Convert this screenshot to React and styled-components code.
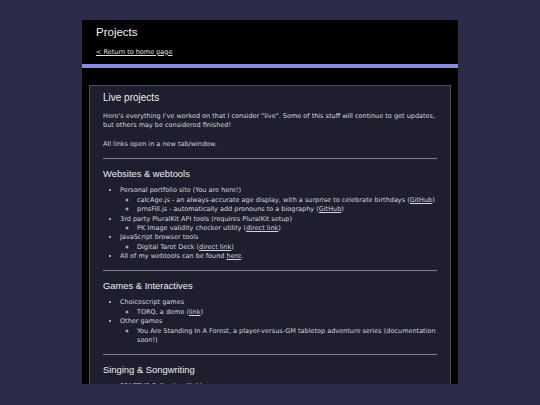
import React from "react"
import styled, { createGlobalStyle } from "styled-components"

const GlobalStyle = createGlobalStyle`
    html, body {
        margin: 0;
        padding: 0;
        background-color: #2c2c4a;
        height: 100%;
    }
    body {
        padding: 20px 0 21px;
        box-sizing: border-box;
    }
    #root {
        height: 100%;
    }
`

const PageFrame = styled.div`
    width: 376px;
    height: 100%;
    margin: 0 auto;
    background-color: #000;
    overflow: hidden;
    display: flex;
    flex-direction: column;
`

const Header = styled.header`
    padding: 6px 14px 7px;
    border-bottom: 4px solid #8b8bdc;
`

const PageTitle = styled.h1`
    margin: 0;
    font-family: "Liberation Sans", Arial, sans-serif;
    font-weight: normal;
    font-size: 11.5px;
    line-height: 13px;
    color: #f0f0f0;
`

const HomeLink = styled.a`
    display: block;
    margin-top: 8.6px;
    font-family: "DejaVu Sans", Verdana, sans-serif;
    font-size: 6.5px;
    line-height: 9.4px;
    color: #e0e0e4;
    text-decoration: underline;
`

const Body = styled.main`
    padding: 17px 7px 0;
`

const Card = styled.section`
    background-color: #1f1e2e;
    border: 1px solid #4c4c62;
    padding: 6px 13px 20px;
    font-family: "DejaVu Sans", Verdana, sans-serif;
    font-size: 6.5px;
    line-height: 9.4px;
    color: #d4d4dc;
`

const CardTitle = styled.h2`
    margin: 0 0 8.4px;
    font-family: "Liberation Sans", Arial, sans-serif;
    font-weight: normal;
    font-size: 10px;
    line-height: 11.5px;
    color: #ececf0;
`

const SectionTitle = styled(CardTitle)`
    font-size: 9.4px;
    margin-bottom: 6.7px;
`

const Intro = styled.p`
    margin: 0;
`

const Divider = styled.hr`
    border: none;
    height: 1px;
    background-color: #80808f;
    margin: 8.8px 0;
`

const List = styled.ul`
    margin: 0;
    padding-left: 17px;
    list-style-type: ${(props) => (props.$nested ? "circle" : "disc")};
`

const Link = styled.a`
    color: inherit;
    text-decoration: underline;
`

const App = () => {
    return (
        <>
            <GlobalStyle />
            <PageFrame>
                <Header>
                    <PageTitle>Projects</PageTitle>
                    <HomeLink href="#">&lt; Return to home page</HomeLink>
                </Header>
                <Body>
                    <Card>
                        <CardTitle>Live projects</CardTitle>
                        <Intro>
                            Here's everything I've worked on that I consider "live". Some of this stuff will continue to get updates, but others may be considered finished!
                            <br />
                            <br />
                            All links open in a new tab/window.
                        </Intro>

                        <Divider />
                        <SectionTitle>Websites &amp; webtools</SectionTitle>
                        <List>
                            <li>
                                Personal portfolio site (You are here!)
                                <List $nested>
                                    <li>calcAge.js - an always-accurate age display, with a surprise to celebrate birthdays (<Link href="#">GitHub</Link>)</li>
                                    <li>prnsFill.js - automatically add pronouns to a biography (<Link href="#">GitHub</Link>)</li>
                                </List>
                            </li>
                            <li>
                                3rd party PluralKit API tools (requires PluralKit setup)
                                <List $nested>
                                    <li>PK Image validity checker utility (<Link href="#">direct link</Link>)</li>
                                </List>
                            </li>
                            <li>
                                JavaScript browser tools
                                <List $nested>
                                    <li>Digital Tarot Deck (<Link href="#">direct link</Link>)</li>
                                </List>
                            </li>
                            <li>All of my webtools can be found <Link href="#">here</Link>.</li>
                        </List>

                        <Divider />
                        <SectionTitle>Games &amp; Interactives</SectionTitle>
                        <List>
                            <li>
                                Choicescript games
                                <List $nested>
                                    <li>TORQ, a demo (<Link href="#">link</Link>)</li>
                                </List>
                            </li>
                            <li>
                                Other games
                                <List $nested>
                                    <li>You Are Standing In A Forest, a player-versus-GM tabletop adventure series (documentation soon!)</li>
                                </List>
                            </li>
                        </List>

                        <Divider />
                        <SectionTitle>Singing &amp; Songwriting</SectionTitle>
                        <List>
                            <li>SPACTUS Collection (<Link href="#">link</Link>)</li>
                            <li>Covers and originals</li>
                        </List>
                    </Card>
                </Body>
            </PageFrame>
        </>
    )
}

export default App
